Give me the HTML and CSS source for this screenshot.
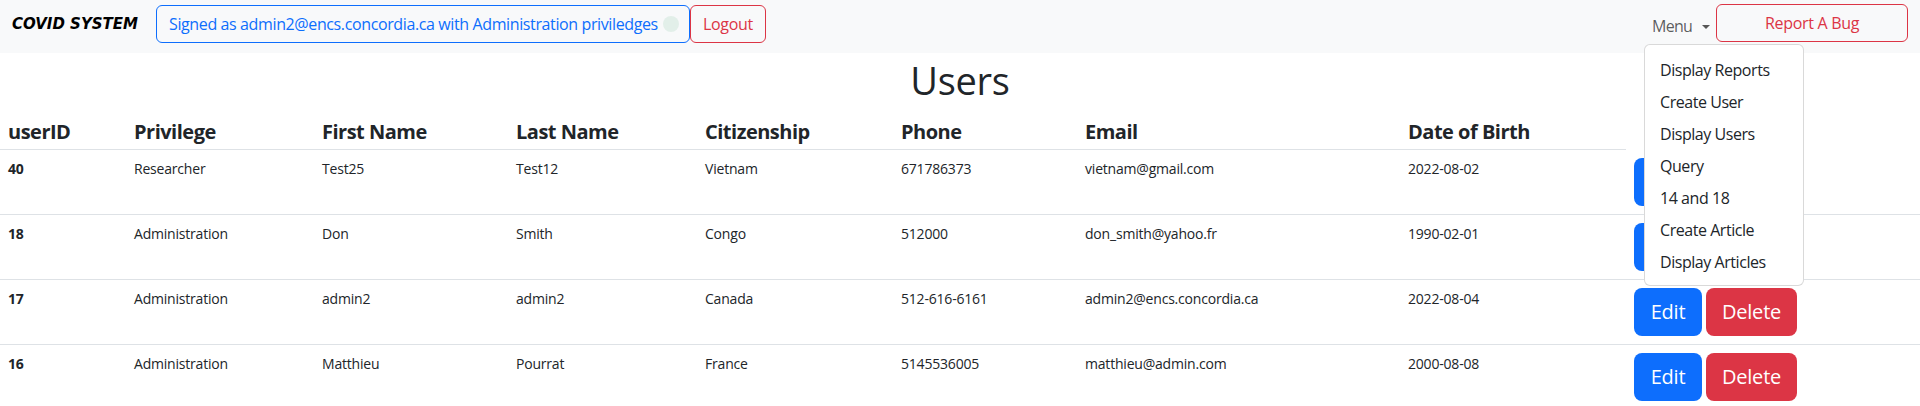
FILE: index.html
```html
<!DOCTYPE html>
<html lang="en">
<head>
    <meta charset="UTF-8">
    <meta name="viewport" content="width=device-width, initial-scale=1.0">
    <title>Users</title>
    <link rel="stylesheet" href="styles.css">
</head>
<body>

    <nav class="navbar">
        <a class="brand" href="#">COVID SYSTEM</a>
        <div class="signed-as">
            Signed as admin2@encs.concordia.ca with Administration priviledges
            <span class="badge"></span>
        </div>
        <button class="btn-outline-danger logout">Logout</button>

        <div class="nav-right">
            <div class="menu">
                <a class="menu-toggle" href="#">Menu<span class="caret"></span></a>
                <div class="dropdown">
                    <a href="#">Display Reports</a>
                    <a href="#">Create User</a>
                    <a href="#">Display Users</a>
                    <a href="#">Query</a>
                    <a href="#">14 and 18</a>
                    <a href="#">Create Article</a>
                    <a href="#">Display Articles</a>
                </div>
            </div>
            <button class="btn-outline-danger report">Report A Bug</button>
        </div>
    </nav>

    <h1>Users</h1>

    <table class="users">
        <colgroup>
            <col class="col-id">
            <col class="col-privilege">
            <col class="col-first">
            <col class="col-last">
            <col class="col-citizen">
            <col class="col-phone">
            <col class="col-email">
            <col class="col-birth">
            <col>
        </colgroup>
        <thead>
            <tr>
                <th>userID</th>
                <th>Privilege</th>
                <th>First Name</th>
                <th>Last Name</th>
                <th>Citizenship</th>
                <th>Phone</th>
                <th>Email</th>
                <th>Date of Birth</th>
            </tr>
        </thead>
        <tbody>
            <tr>
                <td class="id">40</td>
                <td>Researcher</td>
                <td>Test25</td>
                <td>Test12</td>
                <td>Vietnam</td>
                <td>671786373</td>
                <td>vietnam@gmail.com</td>
                <td>2022-08-02</td>
                <td class="actions"><button class="btn-edit">Edit</button><button class="btn-delete">Delete</button></td>
            </tr>
            <tr>
                <td class="id">18</td>
                <td>Administration</td>
                <td>Don</td>
                <td>Smith</td>
                <td>Congo</td>
                <td>512000</td>
                <td>don_smith@yahoo.fr</td>
                <td>1990-02-01</td>
                <td class="actions"><button class="btn-edit">Edit</button><button class="btn-delete">Delete</button></td>
            </tr>
            <tr>
                <td class="id">17</td>
                <td>Administration</td>
                <td>admin2</td>
                <td>admin2</td>
                <td>Canada</td>
                <td>512-616-6161</td>
                <td>admin2@encs.concordia.ca</td>
                <td>2022-08-04</td>
                <td class="actions"><button class="btn-edit">Edit</button><button class="btn-delete">Delete</button></td>
            </tr>
            <tr>
                <td class="id">16</td>
                <td>Administration</td>
                <td>Matthieu</td>
                <td>Pourrat</td>
                <td>France</td>
                <td>5145536005</td>
                <td>matthieu@admin.com</td>
                <td>2000-08-08</td>
                <td class="actions"><button class="btn-edit">Edit</button><button class="btn-delete">Delete</button></td>
            </tr>
        </tbody>
    </table>

</body>
</html>
```
FILE: styles.css
```css
html, body {
    height: 100%;
    overflow: hidden;
}

body {
    margin: 0;
    font-family: "Open Sans", "Noto Sans", sans-serif;
    font-size: 16px;
    letter-spacing: -0.3px;
    line-height: 1.5;
    color: #212529;
    background-color: #fff;
}

button {
    font-family: inherit;
    letter-spacing: inherit;
    cursor: pointer;
}

a {
    text-decoration: none;
    color: inherit;
}

.navbar {
    display: flex;
    align-items: center;
    box-sizing: border-box;
    height: 53px;
    padding: 0 12px 5px;
    background-color: #f8f9fa;
}

.brand {
    width: 128px;
    margin-right: 16px;
    font-family: "DejaVu Sans", sans-serif;
    font-size: 15px;
    font-style: italic;
    font-weight: bold;
    letter-spacing: 0;
    white-space: nowrap;
    color: #000;
}

.signed-as {
    display: flex;
    align-items: center;
    gap: 5px;
    box-sizing: border-box;
    width: 534px;
    height: 38px;
    padding: 0 12px;
    border: 1px solid #0d6efd;
    border-radius: 6px;
    color: #0d6efd;
    letter-spacing: -0.38px;
    white-space: nowrap;
}

.badge {
    flex-shrink: 0;
    width: 16px;
    height: 16px;
    border-radius: 50%;
    background-color: #e2efe9;
}

.btn-outline-danger {
    height: 38px;
    border: 1px solid #dc3545;
    border-radius: 6px;
    background-color: transparent;
    color: #dc3545;
    font-size: 16px;
}

.logout {
    width: 76px;
    padding: 0;
}

.nav-right {
    display: flex;
    align-items: flex-start;
    align-self: flex-start;
    margin-left: auto;
    padding-top: 4px;
}

.menu {
    position: relative;
    margin-top: 2px;
}

.menu-toggle {
    display: block;
    width: 72px;
    padding: 8px;
    box-sizing: border-box;
    color: rgba(0, 0, 0, 0.65);
    letter-spacing: -0.7px;
    white-space: nowrap;
}

.caret {
    display: inline-block;
    margin-left: 10px;
    vertical-align: 3px;
    border-top: 4px solid;
    border-right: 4px solid transparent;
    border-left: 4px solid transparent;
}

.dropdown {
    position: absolute;
    top: 38px;
    left: 0;
    z-index: 100;
    box-sizing: border-box;
    width: 160px;
    padding: 8px 0;
    border: 1px solid rgba(0, 0, 0, 0.15);
    border-radius: 6px;
    background-color: #fff;
    letter-spacing: -0.45px;
}

.dropdown a {
    display: block;
    padding: 5px 15px 3px;
    white-space: nowrap;
}

.report {
    width: 192px;
}

h1 {
    margin: 3px 0 0;
    font-size: 38px;
    font-weight: 400;
    line-height: 48px;
    text-align: center;
}

.users {
    width: 100%;
    table-layout: fixed;
    border-collapse: collapse;
    font-size: 14px;
}

.col-id { width: 126px; }
.col-privilege { width: 188px; }
.col-first { width: 194px; }
.col-last { width: 189px; }
.col-citizen { width: 196px; }
.col-phone { width: 184px; }
.col-email { width: 323px; }
.col-birth { width: 226px; }

.users th,
.users td {
    padding: 8px;
    border-bottom: 1px solid #dee2e6;
    text-align: left;
    vertical-align: top;
}

.users th {
    padding-top: 13px;
    padding-bottom: 3px;
    font-size: 20px;
    font-weight: bold;
    letter-spacing: -0.5px;
    line-height: 29px;
}

.users td {
    line-height: 21px;
    letter-spacing: -0.2px;
}

.users .id {
    font-weight: bold;
}

.actions {
    white-space: nowrap;
}

.btn-edit,
.btn-delete {
    height: 48px;
    padding: 0;
    border: none;
    border-radius: 8px;
    color: #fff;
    font-size: 20px;
}

.btn-edit {
    width: 68px;
    margin-right: 4px;
    background-color: #0d6efd;
}

.btn-delete {
    width: 91px;
    background-color: #dc3545;
}
```
